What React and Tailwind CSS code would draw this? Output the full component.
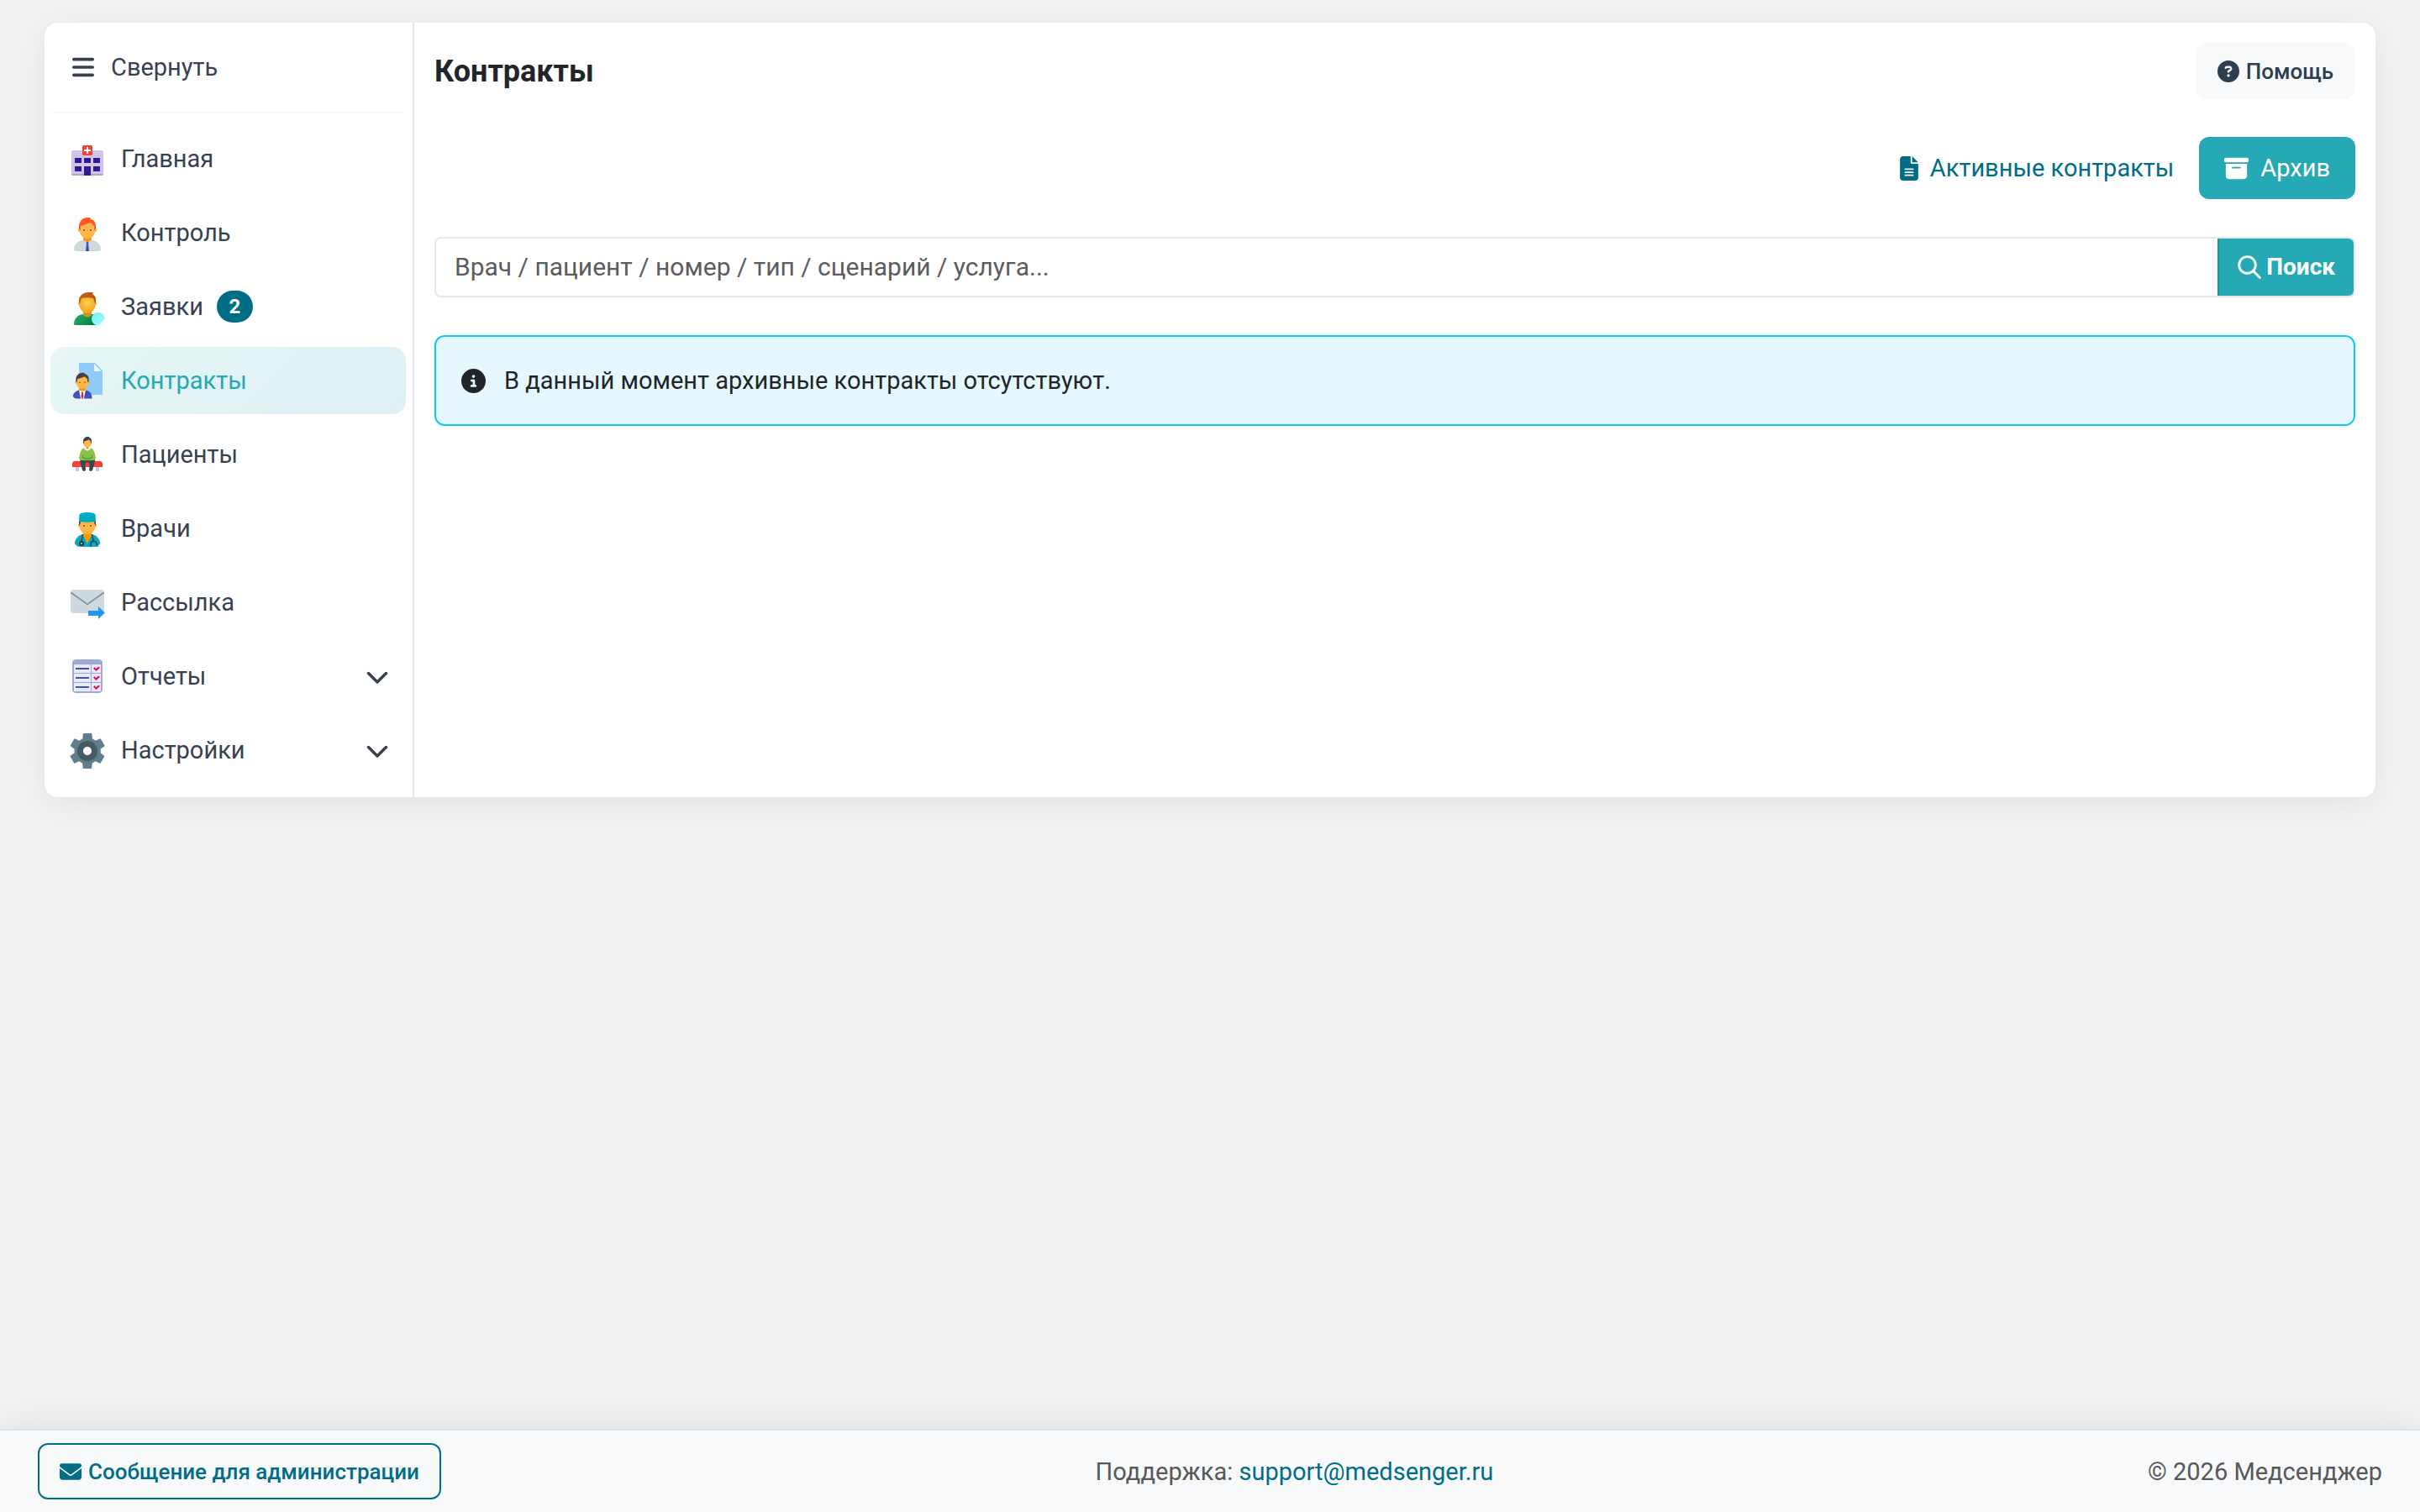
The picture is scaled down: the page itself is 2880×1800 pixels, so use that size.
import React from "react";
import {
  FaBars,
  FaChevronDown,
  FaCircleQuestion,
  FaFileLines,
  FaBoxArchive,
  FaCircleInfo,
  FaEnvelope,
} from "react-icons/fa6";
import { FcSettings } from "react-icons/fc";

function Icon({ children }) {
  return (
    <svg viewBox="0 0 48 48" className="size-12 shrink-0" aria-hidden="true">
      {children}
    </svg>
  );
}

function HospitalIcon() {
  return (
    <Icon>
      <rect x="5" y="14" width="38" height="30" rx="2" fill="#D1C4E9" />
      <path d="M5 42h38c0 1.100-.9 2-2 2H7c-1.100 0-2-.9-2-2z" fill="#B39DDB" />
      <path
        d="M9 23h8v6H9zM20 23h8v6h-8zM31 23h8v6h-8zM9 33h8v6H9zM31 33h8v6h-8zM20 33h8v11h-8z"
        fill="#311B92"
      />
      <rect x="18" y="8" width="12" height="12" rx="1.500" fill="#F44336" />
      <path d="M23 10h2v3h3v2h-3v3h-2v-3h-3v-2h3z" fill="#fff" />
    </Icon>
  );
}

function PersonHead({ hair }) {
  return (
    <>
      <circle cx="33" cy="19" r="2" fill="#FFA726" />
      <circle cx="15" cy="19" r="2" fill="#FFA726" />
      <path
        d="M33 13c0-7.600-18-5-18 0v7c0 5 4 9 9 9s9-4 9-9v-7z"
        fill="#FFB74D"
      />
      <path
        d="M24 4c-6.100 0-10 4.900-10 11v2.300l2 1.700v-5l12-4 4 4v5l2-1.700V15c0-4-1-8-6-9l-1-2h-3z"
        fill={hair}
      />
      <circle cx="28" cy="19" r="1" fill="#784719" />
      <circle cx="20" cy="19" r="1" fill="#784719" />
    </>
  );
}

function ManagerIcon() {
  return (
    <Icon>
      <path
        d="M29 33H19C13 33.500 8 38 8 43.500C8 45 9 46 10.500 46h27c1.500 0 2.500-1 2.500-2.500C40 38 35 33.500 29 33z"
        fill="#CFD8DC"
      />
      <path d="M19 28h10v5c-2 1.500-8 1.500-10 0z" fill="#FF9800" />
      <path d="M22.500 34.500h3l-.5 2 1 9.500h-4l1-9.500z" fill="#3F51B5" />
      <g transform="translate(0 2)">
        <PersonHead hair="#FF5722" />
      </g>
    </Icon>
  );
}

function RequestIcon() {
  return (
    <Icon>
      <defs>
        <linearGradient id="rq-body" x1="12" y1="33" x2="26" y2="47" gradientUnits="userSpaceOnUse">
          <stop offset="0" stopColor="#21AD64" />
          <stop offset="1" stopColor="#088242" />
        </linearGradient>
        <radialGradient id="rq-face" cx="24" cy="20" r="11" gradientUnits="userSpaceOnUse">
          <stop offset="0" stopColor="#FFCF54" />
          <stop offset="1" stopColor="#EDA820" />
        </radialGradient>
        <linearGradient id="rq-hair" x1="15" y1="8" x2="33" y2="16" gradientUnits="userSpaceOnUse">
          <stop offset="0" stopColor="#C26715" />
          <stop offset="1" stopColor="#B85515" />
        </linearGradient>
        <linearGradient id="rq-shield" x1="32" y1="33" x2="43" y2="43" gradientUnits="userSpaceOnUse">
          <stop offset="0" stopColor="#7DF0FC" />
          <stop offset="1" stopColor="#A2F7FF" />
        </linearGradient>
      </defs>
      <path
        d="M18 33c-5 1-10 5-10 11.500 0 1 .6 1.500 1.500 1.500H36V33z"
        fill="url(#rq-body)"
      />
      <path d="M19 28h10v5.500c-1 4-9 4-10 0z" fill="#D6911E" />
      <path
        d="M14 13h20v6c1.200 1 1 3-.5 4-1 5-5 9-9.500 9s-8.500-4-9.500-9c-1.500-1-1.700-3-.5-4z"
        fill="url(#rq-face)"
      />
      <path
        d="M14 20c-1-8 4-13 11-13h5.500v2.500c3 1.500 4 4.500 3.500 10.500h-1c-.5-2-1-4-2-6-4-1-10-1-14 0-1 2-1 4-2 6z"
        fill="url(#rq-hair)"
      />
      <path
        d="M37 31c2.500 0 4.500 1 6 2.500 1 1.200 2 3 2.200 4.500l-6.500 7.500C37.500 46.900 35.500 47 34 46c-3-1.500-5-4-5-7.200C29 34.500 32.500 31 37 31z"
        fill="url(#rq-shield)"
      />
    </Icon>
  );
}

function ContractIcon() {
  return (
    <Icon>
      <path d="M14 3h19l9 9v27.500c0 .8-.7 1.500-1.500 1.500H14z" fill="#90CAF9" />
      <path d="M32 4.200v8.800h8.800z" fill="#E1F5FE" />
      <g transform="translate(-.5 11.600) scale(.77)">
        <path d="M19 25h10v7l-5 6-5-6z" fill="#FF9800" />
        <PersonHead hair="#424242" />
        <path
          d="M29 31l-5 12-5-12c-4 1-9 4-9.500 9.500C10.500 43 13 44 15 44h24c0-9-4-11.500-10-13z"
          fill="#3F51B5"
        />
        <path d="M19 31l5 2 5-2-2.500 13h-5z" fill="#fff" />
        <path d="M22.300 34h3.400l-.6 2 1 5-2.100 4-2.100-4 1-5z" fill="#D32F2F" />
      </g>
    </Icon>
  );
}

function PatientIcon() {
  return (
    <Icon>
      <path d="M10 38h4v6h-4zM34 38h4v6h-4z" fill="#C5CAE9" />
      <path d="M6 39v-4c0-1.700 1.300-3 3-3h30c1.700 0 3 1.300 3 3v4z" fill="#F44336" />
      <path
        d="M16 29h16.500c1 2 .5 3.500 0 5l-2.300 8.500c-.6 2-4 1.900-4-.3L26.500 35 25 33h-2l-1.500 2 .5 7.200c0 2.200-3.400 2.300-4 .3L15.700 34c-.5-1.500-.7-3 .3-5z"
        fill="#37474F"
      />
      <path
        d="M21 16h6c3 .6 4.500 3 5.500 6l1.300 5c.4 2-.3 3.800-2.500 4l-4.300.2h-6l-4.300-.2c-2.200-.2-2.900-2-2.500-4l1.300-5c1-3 2.500-5.400 5.500-6z"
        fill="#8BC34A"
      />
      <path
        d="M18.500 23.500l.5 3.500 3.500 1.500h3L29 27l.5-3.500.6 4.500-4 1.800h-4.200L17.900 28z"
        fill="#558B2F"
      />
      <path d="M20.500 16h7c.5 2-1 3.500-3.500 3.500S20 18 20.500 16z" fill="#FAFAFA" />
      <path d="M22 13h4v3.500c-1 .8-3 .8-4 0z" fill="#FF9800" />
      <path d="M19.500 8c0-4 9-4 9 0v3.500c0 2.500-2 4.300-4.500 4.300s-4.500-1.800-4.500-4.300z" fill="#FFB74D" />
      <path d="M24 3c-3.200 0-5 2.500-5 5.500l.3 2.500.8-.3V8.500L26 6.500l1.900 2v2.200l.8.300.3-2.500C29 6 28.400 4.500 26.300 4L26 3z" fill="#424242" />
    </Icon>
  );
}

function DoctorIcon() {
  return (
    <Icon>
      <path
        d="M29 31H19C13.500 32 9.500 36 8.700 42c2 2.700 4 4 6.300 4h18c2.300 0 4.300-1.300 6.300-4C38.500 36 34.500 32 29 31z"
        fill="#00ACC1"
      />
      <path d="M19 28h10v5l-5 9-5-9z" fill="#FF9800" />
      <circle cx="33" cy="21" r="2" fill="#FFA726" />
      <circle cx="15" cy="21" r="2" fill="#FFA726" />
      <path d="M14 14h20v6.500l-1.500-1.500h-17L14 20.500z" fill="#37474F" />
      <path d="M16 15h16l1 7c0 5-4 9-9 9s-9-4-9-9z" fill="#FFB74D" />
      <path
        d="M14 16l.4-7.500c.2-1.500 1-2.200 2.300-2.600 4.600-1.200 10-1.200 14.600 0 1.300.4 2.100 1.100 2.300 2.600L34 16c-6 1-14 1-20 0z"
        fill="#00ACC1"
      />
      <circle cx="28" cy="21" r="1" fill="#784719" />
      <circle cx="20" cy="21" r="1" fill="#784719" />
      <path d="M18.500 31c0 4-1.500 5-1.500 9M29.500 31c0 4 1.500 4 1.500 8" fill="none" stroke="#37474F" strokeWidth="1.600" />
      <circle cx="17" cy="42" r="2" fill="#CFD8DC" stroke="#263238" strokeWidth="2" />
      <path d="M28 45.500v-2.500c0-5 6.500-5 7 0l.5 2" fill="none" stroke="#37474F" strokeWidth="1.700" />
      <path d="M30 44h3v2h-3zM35.500 44.500h1.500v1.500h-1.500z" fill="#00BCD4" />
    </Icon>
  );
}

function MailingIcon() {
  return (
    <Icon>
      <rect x="4" y="9" width="40" height="28" rx="3" fill="#CFD8DC" />
      <path d="M4.300 12.500L24 26.300 43.700 12.500" fill="none" stroke="#78909C" strokeWidth="1.600" />
      <path d="M25 34h12v-5l7.800 7.500L37 44v-4H25z" fill="#2196F3" />
    </Icon>
  );
}

function ReportIcon() {
  return (
    <Icon>
      <rect x="6" y="4" width="36" height="40" rx="4.500" fill="#9FA8DA" />
      <path
        d="M8 10h20v10H8zM29 10h11v10H29zM8 21h20v10H8zM29 21h11v10H29zM8 32h20v10H8zM29 32h11v10H29z"
        fill="#E8EAF6"
      />
      <path d="M10 14h16v2H10zM10 25h16v2H10zM10 36h16v2H10z" fill="#3F51B5" />
      <path
        d="M31.700 14l2.800 2.600 3.600-3.400M31.700 25l2.800 2.600 3.600-3.400M31.700 36l2.800 2.600 3.600-3.400"
        fill="none"
        stroke="#F50057"
        strokeWidth="2"
      />
    </Icon>
  );
}

const items = [
  { label: "Главная", icon: <HospitalIcon /> },
  { label: "Контроль", icon: <ManagerIcon /> },
  { label: "Заявки", icon: <RequestIcon />, badge: 2 },
  { label: "Контракты", icon: <ContractIcon />, active: true },
  { label: "Пациенты", icon: <PatientIcon /> },
  { label: "Врачи", icon: <DoctorIcon /> },
  { label: "Рассылка", icon: <MailingIcon /> },
  { label: "Отчеты", icon: <ReportIcon />, menu: true },
  { label: "Настройки", icon: <FcSettings className="size-12 shrink-0" />, menu: true },
];

const rowClass =
  "flex h-20 w-full items-center gap-4 rounded-2xl px-5 text-left";

function NavItem({ label, icon, badge, active, menu }) {
  const content = (
    <>
      {icon}
      <span>{label}</span>
      {badge && (
        <span className="flex h-[38px] w-[43px] items-center justify-center rounded-full bg-[#006D87] text-2xl font-bold text-white">
          {badge}
        </span>
      )}
      {menu && <FaChevronDown className="ml-auto size-7" />}
    </>
  );
  if (menu) {
    return (
      <button type="button" aria-expanded="false" className={rowClass}>
        {content}
      </button>
    );
  }
  return (
    <a
      href="#"
      aria-current={active ? "page" : undefined}
      className={
        active
          ? `${rowClass} bg-linear-135 from-[#E8F6F7] via-[#E1F3F4] to-[#DEF0F5] text-[#25A9B5]`
          : rowClass
      }
    >
      {content}
    </a>
  );
}

function Sidebar() {
  return (
    <aside className="w-[440px] shrink-0 border-r-2 border-[#E5E7EB] pr-2 pb-4 pl-[7px] text-[#374151]">
      <button
        type="button"
        className="flex h-[108px] w-full items-center gap-5 border-b-2 border-[#F8F9FA] px-[26px] text-left"
      >
        <FaBars className="h-[30px] w-[26px]" />
        <span>Свернуть</span>
      </button>
      <nav className="mt-[14px] flex flex-col gap-2">
        {items.map((item) => (
          <NavItem key={item.label} {...item} />
        ))}
      </nav>
    </aside>
  );
}

function SearchIcon() {
  return (
    <svg viewBox="0 0 28 28" className="size-7" fill="none" stroke="currentColor" strokeWidth="2.800" strokeLinecap="round" aria-hidden="true">
      <circle cx="11.500" cy="11.500" r="9.800" />
      <path d="M18.800 18.800L26.400 26.400" />
    </svg>
  );
}

function Main() {
  return (
    <main className="min-w-0 flex-1 px-6 pt-6 pb-6">
      <div className="flex items-center justify-between">
        <h1 className="text-4xl font-bold text-[#212529]">Контракты</h1>
        <button
          type="button"
          className="flex h-[67px] items-center gap-2 rounded-xl bg-[#F8F9FB] px-[26px] text-[26px] font-medium text-[#2C3E50]"
        >
          <FaCircleQuestion className="size-[26px]" />
          Помощь
        </button>
      </div>

      <div className="mt-[45px] flex items-center justify-end">
        <a href="#" className="flex h-[74px] items-center gap-[14px] px-[30px] text-[#006D87]">
          <FaFileLines className="h-[29px] w-[22px]" />
          Активные контракты
        </a>
        <a
          href="#"
          className="flex h-[74px] items-center gap-[14px] rounded-xl bg-[#25A9B5] px-[30px] text-white"
        >
          <FaBoxArchive className="size-[29px]" />
          Архив
        </a>
      </div>

      <form className="mt-[45px] flex h-[72px] rounded-lg border-2 border-[#E5E7EB]">
        <input
          type="text"
          aria-label="Поиск контрактов"
          placeholder="Врач / пациент / номер / тип / сценарий / услуга..."
          className="min-w-0 flex-1 rounded-l-lg bg-white px-[22px] text-[30px] text-[#212529] outline-none placeholder:text-[#5A5C5F]"
        />
        <button
          type="button"
          className="flex items-center gap-1.5 rounded-r-md border-l-2 border-[#1F929C] bg-[#25A9B5] px-[22px] text-[28px] font-bold text-white"
        >
          <SearchIcon />
          Поиск
        </button>
      </form>

      <div
        role="status"
        className="mt-[45px] flex h-[108px] items-center gap-[22px] rounded-xl border-2 border-[#0DCAF0] bg-[#E5F8FD] px-[30px] text-[#212529]"
      >
        <FaCircleInfo className="size-[29px]" />
        В данный момент архивные контракты отсутствуют.
      </div>
    </main>
  );
}

export default function App() {
  return (
    <div className="flex min-h-screen flex-col bg-[#F2F3F5] font-[Roboto,sans-serif] text-[29px] leading-10">
      <div className="mx-[53px] mt-[27px] flex rounded-2xl bg-white shadow-[0_8px_40px_rgba(0,0,0,0.08)]">
        <Sidebar />
        <Main />
      </div>

      <footer className="mt-auto flex h-[99px] items-center justify-between border-t-2 border-[#DEE2E6] bg-[#F8F9FB] px-[45px] text-[#56585A] shadow-[0_-8px_40px_rgba(0,0,0,0.08)]">
        <button
          type="button"
          className="flex h-[67px] items-center gap-2 rounded-xl border-2 border-[#006D87] px-6 text-[26px] font-medium text-[#006D87]"
        >
          <FaEnvelope className="size-[26px]" />
          Сообщение для администрации
        </button>
        <p>
          Поддержка:{" "}
          <a href="mailto:support@medsenger.ru" className="text-[#006D87]">
            support@medsenger.ru
          </a>
        </p>
        <p>© 2026 Медсенджер</p>
      </footer>
    </div>
  );
}
